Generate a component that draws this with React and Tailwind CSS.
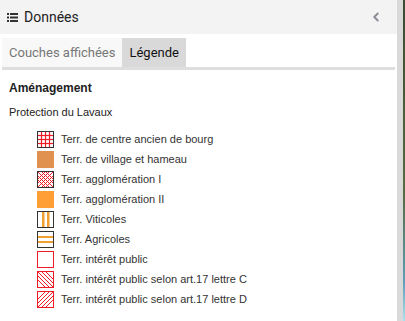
import { ChevronLeft } from "lucide-react";

const items = [
  { label: "Terr. de centre ancien de bourg", kind: "grid" },
  { label: "Terr. de village et hameau", kind: "solid1" },
  { label: "Terr. agglomération I", kind: "cross" },
  { label: "Terr. agglomération II", kind: "solid2" },
  { label: "Terr. Viticoles", kind: "vbars" },
  { label: "Terr. Agricoles", kind: "hbars" },
  { label: "Terr. intérêt public", kind: "empty" },
  { label: "Terr. intérêt public selon art.17 lettre C", kind: "back" },
  { label: "Terr. intérêt public selon art.17 lettre D", kind: "fwd" },
];

function Swatch({ kind }) {
  if (kind === "solid1") return <div className="w-[17px] h-[17px] bg-[#e0904f]" />;
  if (kind === "solid2") return <div className="w-[17px] h-[17px] bg-[#ff9f35]" />;
  return (
    <svg width="17" height="17" viewBox="0 0 17 17">
      <rect x="0" y="0" width="17" height="17" fill="#fff" />
      {kind === "grid" && (
        <g stroke="#ee1c24" strokeWidth="1.2">
          {[4.5, 8.5, 12.5].map((v) => (
            <g key={v}>
              <line x1={v} y1="1" x2={v} y2="16" />
              <line x1="1" y1={v} x2="16" y2={v} />
            </g>
          ))}
        </g>
      )}
      {kind === "cross" && (
        <g stroke="#ee1c24" strokeWidth="1">
          {[-8, -4, 0, 4, 8].map((o) => (
            <g key={o}>
              <line x1={1 + o} y1="1" x2={16 + o} y2="16" />
              <line x1={16 + o} y1="1" x2={1 + o} y2="16" />
            </g>
          ))}
        </g>
      )}
      {kind === "vbars" && (
        <g fill="#f0a030">
          <rect x="5" y="1" width="2.5" height="15" />
          <rect x="10" y="1" width="2.5" height="15" />
        </g>
      )}
      {kind === "hbars" && (
        <g fill="#f0a030">
          <rect x="1" y="5" width="15" height="2" />
          <rect x="1" y="10" width="15" height="2" />
        </g>
      )}
      {kind === "back" && (
        <g stroke="#ee1c24" strokeWidth="1">
          {[-8, -4, 0, 4, 8].map((o) => (
            <line key={o} x1={1 + o} y1="1" x2={16 + o} y2="16" />
          ))}
        </g>
      )}
      {kind === "fwd" && (
        <g stroke="#ee1c24" strokeWidth="1">
          {[-8, -4, 0, 4, 8].map((o) => (
            <line key={o} x1={16 + o} y1="1" x2={1 + o} y2="16" />
          ))}
        </g>
      )}
      <rect
        x="0.5"
        y="0.5"
        width="16"
        height="16"
        fill="none"
        stroke={["empty", "back", "fwd"].includes(kind) ? "#ee1c24" : "#333"}
        strokeWidth="1"
      />
    </svg>
  );
}

export default function App() {
  return (
    <div className="flex w-[405px] h-[321px] overflow-hidden bg-white">
      <div className="w-[397px] flex flex-col bg-white">
        {/* Header */}
        <div className="h-[34px] bg-[#f3f3f3] flex items-center justify-between pl-[7px] pr-[14px] font-['Roboto',sans-serif]">
          <div className="flex items-center gap-[6px]">
            <svg width="11" height="9" viewBox="0 0 11 9">
              <rect x="0" y="0" width="2" height="2" fill="#333" />
              <rect x="3" y="0" width="8" height="2" fill="#333" />
              <rect x="0" y="3.5" width="2" height="2" fill="#333" />
              <rect x="3" y="3.5" width="8" height="2" fill="#333" />
              <rect x="0" y="7" width="2" height="2" fill="#333" />
              <rect x="3" y="7" width="8" height="2" fill="#333" />
            </svg>
            <span className="text-[14px] text-[#222]">Données</span>
          </div>
          <ChevronLeft size={14} strokeWidth={3.5} color="#8a8f96" />
        </div>

        {/* Tabs */}
        <div className="mt-[4px] mx-[2px] flex h-[29px] font-['Roboto',sans-serif] text-[13px]">
          <div className="px-[7px] flex items-center bg-[#f8f8f8] text-[#777]">Couches affichées</div>
          <div className="px-[7px] flex items-center bg-[#d9d9d9] text-[#111]">Légende</div>
        </div>
        <div className="mx-[2px] h-[3px] bg-[#dedede]" />

        {/* Legend */}
        <div className="px-[9px] pt-[10px] font-['Liberation_Sans',Arial,sans-serif] text-[#333]">
          <div className="text-[12px] font-bold text-[#222] leading-[16px]">Aménagement</div>
          <div className="mt-[8px] text-[11px] leading-[16px] text-[#222]">Protection du Lavaux</div>
          <div className="mt-[9px] pl-[28px] flex flex-col">
            {items.map((it) => (
              <div key={it.label} className="h-[20px] flex items-center gap-[7px]">
                <Swatch kind={it.kind} />
                <span className="text-[11px] text-[#333]">{it.label}</span>
              </div>
            ))}
          </div>
        </div>
      </div>
      <div className="w-[6px] bg-[#d9d9d9]" />
      <div className="flex-1 bg-[linear-gradient(#3b4a32,#556b3f_60%,#5fa0b8_88%,#aee0f0)]" />
    </div>
  );
}
